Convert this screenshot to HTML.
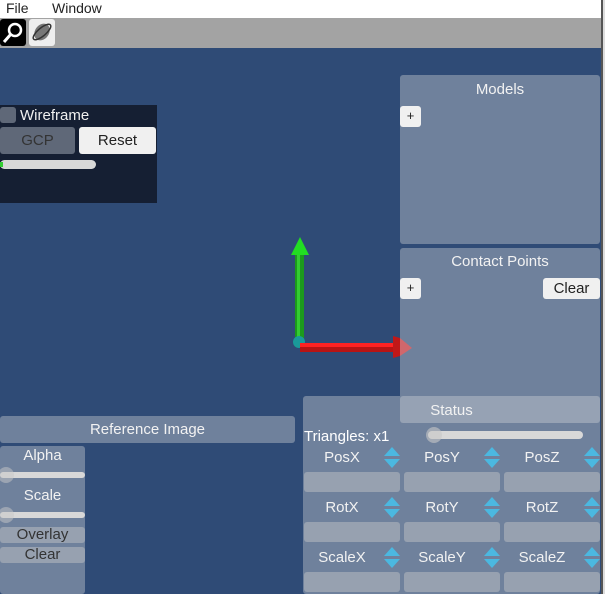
<!DOCTYPE html>
<html><head><meta charset="utf-8"><style>
*{margin:0;padding:0;box-sizing:border-box}
body{width:605px;height:594px;overflow:hidden;position:relative;background:#2f4b76;font-family:"Liberation Sans",sans-serif;font-size:14px}
.a{position:absolute}
.menu{left:0;top:0;width:605px;height:18px;background:#fff;color:#222}
.tool{left:0;top:18px;width:605px;height:30px;background:#a3a3a3}
.pnl{background:#6f819c;border-radius:3px}
.w{color:#f2f2f2;text-align:center}
.btn{background:#f0f0f0;border-radius:3px;color:#222;text-align:center}
.fld{background:#97a1b0;border-radius:3px}
.lbl{font-size:15px}
</style></head><body>
<div class="a menu"><span class="a" style="left:6px;top:0">File</span><span class="a" style="left:52px;top:0">Window</span></div>
<div class="a tool"></div>
<div class="a" style="left:0;top:19px;width:26px;height:27px;background:#000;border-radius:3px"><svg width="26" height="27"><circle cx="15" cy="11" r="6" fill="none" stroke="#fff" stroke-width="2.5"/><line x1="11" y1="15" x2="4" y2="23" stroke="#fff" stroke-width="3"/></svg></div>
<div class="a" style="left:29px;top:19px;width:26px;height:27px;background:#eee;border-radius:3px"><svg width="26" height="27"><ellipse cx="13" cy="13" rx="7" ry="9" fill="#777" transform="rotate(35 13 13)"/><ellipse cx="13" cy="13" rx="11" ry="4" fill="none" stroke="#333" stroke-width="1.5" transform="rotate(-40 13 13)"/></svg></div>
<div class="a" style="left:601px;top:0;width:2px;height:594px;background:#555"></div>
<div class="a" style="left:603px;top:0;width:2px;height:594px;background:#ddd"></div>

<div class="a" style="left:0;top:105px;width:157px;height:98px;background:#151f33"></div>
<div class="a" style="left:0;top:107px;width:16px;height:16px;background:#5f6878;border-radius:3px"></div>
<div class="a" style="left:20px;top:107px;color:#f0f0f0;font-size:15px">Wireframe</div>
<div class="a" style="left:0;top:127px;width:75px;height:27px;background:#5f6878;border-radius:3px;color:#333;text-align:center;line-height:27px;font-size:15px">GCP</div>
<div class="a btn" style="left:79px;top:127px;width:77px;height:27px;line-height:27px;font-size:15px">Reset</div>
<div class="a" style="left:0;top:160px;width:96px;height:9px;background:#d8d8d8;border-radius:5px"></div>
<div class="a" style="left:0;top:162px;width:3px;height:5px;background:#3c3"></div>

<div class="a pnl" style="left:400px;top:75px;width:200px;height:169px"></div>
<div class="a w lbl" style="left:400px;top:81px;width:200px">Models</div>
<div class="a btn" style="left:400px;top:106px;width:21px;height:21px;line-height:20px;font-size:13px">+</div>
<div class="a pnl" style="left:400px;top:248px;width:200px;height:170px"></div>
<div class="a w lbl" style="left:400px;top:253px;width:200px">Contact Points</div>
<div class="a btn" style="left:400px;top:278px;width:21px;height:21px;line-height:20px;font-size:13px">+</div>
<div class="a btn lbl" style="left:543px;top:278px;width:57px;height:21px;line-height:21px">Clear</div>

<svg class="a" style="left:280px;top:230px" width="140" height="130">
<rect x="15" y="22" width="9" height="95" fill="#1c9a1c"/><rect x="17" y="22" width="3" height="95" fill="#3c3"/>
<polygon points="20,7 11,25 29,25" fill="#22dd22"/>
<circle cx="19" cy="112" r="6" fill="#1a9a9a"/>
<rect x="20" y="113" width="95" height="9" fill="#b81414"/><rect x="20" y="113" width="95" height="4" fill="#f22"/>
<polygon points="113,106 113,128 120,126 120,108" fill="#c01818"/>
<polygon points="120,108 120,126 132,118" fill="#e86060" opacity=".8"/>
</svg>

<div class="a pnl" style="left:303px;top:396px;width:297px;height:198px"></div>
<div class="a" style="left:400px;top:396px;width:200px;height:27px;background:#96a2b4;border-radius:3px"></div>
<div class="a lbl" style="left:303px;top:402px;width:297px;text-align:center;color:#f2f2f2">Status</div>
<div class="a lbl" style="left:304px;top:428px;color:#fff">Triangles: x1</div>
<div class="a" style="left:428px;top:431px;width:155px;height:8px;background:#d8d8d8;border-radius:4px"></div>
<div class="a" style="left:426px;top:427px;width:16px;height:16px;background:rgba(200,200,200,.6);border-radius:50%"></div>

<div class="a lbl" style="left:0;top:416px;width:295px;height:27px;background:#6f819c;border-radius:3px;color:#f2f2f2;text-align:center;line-height:28px">Reference Image</div>
<div class="a pnl" style="left:0;top:446px;width:85px;height:148px"></div>
<div class="a w lbl" style="left:0;top:447px;width:85px">Alpha</div>
<div class="a" style="left:0;top:472px;width:85px;height:6px;background:#d8d8d8;border-radius:3px"></div>
<div class="a" style="left:-2px;top:467px;width:16px;height:16px;background:rgba(200,200,200,.5);border-radius:50%"></div>
<div class="a w lbl" style="left:0;top:487px;width:85px">Scale</div>
<div class="a" style="left:0;top:512px;width:85px;height:6px;background:#d8d8d8;border-radius:3px"></div>
<div class="a" style="left:-2px;top:507px;width:16px;height:16px;background:rgba(200,200,200,.5);border-radius:50%"></div>
<div class="a lbl" style="left:0;top:527px;width:85px;height:16px;background:#97a1b0;border-radius:3px;color:#333;text-align:center;line-height:16px">Overlay</div>
<div class="a lbl" style="left:0;top:547px;width:85px;height:16px;background:#97a1b0;border-radius:3px;color:#333;text-align:center;line-height:16px">Clear</div>

<div id="g"></div>
<script>
var rows=[["PosX","PosY","PosZ"],["RotX","RotY","RotZ"],["ScaleX","ScaleY","ScaleZ"]],h="";
rows.forEach(function(r,i){var y=447+i*50;r.forEach(function(t,j){var x=304+j*100;
h+='<div class="a w lbl" style="left:'+x+'px;top:'+(y+2)+'px;width:76px">'+t+'</div>';
h+='<svg class="a" style="left:'+(x+80)+'px;top:'+(y)+'px" width="16" height="22"><polygon points="8,0 16,9 0,9" fill="#4bb8e0"/><polygon points="0,12 16,12 8,21" fill="#4bb8e0"/></svg>';
h+='<div class="a fld" style="left:'+x+'px;top:'+(y+25)+'px;width:96px;height:20px"></div>';});});
document.getElementById("g").innerHTML=h;
</script>
</body></html>
